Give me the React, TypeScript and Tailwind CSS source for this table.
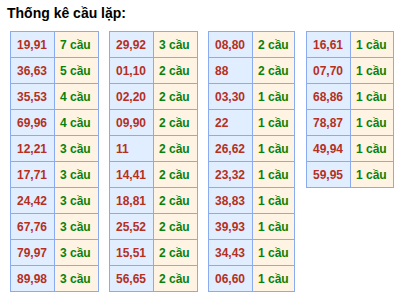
const tables: [string, string][][] = [
  [
    ["19,91", "7 cầu"],
    ["36,63", "5 cầu"],
    ["35,53", "4 cầu"],
    ["69,96", "4 cầu"],
    ["12,21", "3 cầu"],
    ["17,71", "3 cầu"],
    ["24,42", "3 cầu"],
    ["67,76", "3 cầu"],
    ["79,97", "3 cầu"],
    ["89,98", "3 cầu"],
  ],
  [
    ["29,92", "3 cầu"],
    ["01,10", "2 cầu"],
    ["02,20", "2 cầu"],
    ["09,90", "2 cầu"],
    ["11", "2 cầu"],
    ["14,41", "2 cầu"],
    ["18,81", "2 cầu"],
    ["25,52", "2 cầu"],
    ["15,51", "2 cầu"],
    ["56,65", "2 cầu"],
  ],
  [
    ["08,80", "2 cầu"],
    ["88", "2 cầu"],
    ["03,30", "1 cầu"],
    ["22", "1 cầu"],
    ["26,62", "1 cầu"],
    ["23,32", "1 cầu"],
    ["38,83", "1 cầu"],
    ["39,93", "1 cầu"],
    ["34,43", "1 cầu"],
    ["06,60", "1 cầu"],
  ],
  [
    ["16,61", "1 cầu"],
    ["07,70", "1 cầu"],
    ["68,86", "1 cầu"],
    ["78,87", "1 cầu"],
    ["49,94", "1 cầu"],
    ["59,95", "1 cầu"],
  ],
]

// widths are a bit uneven in the original, keep them as they were
const tableClass = [
  "w-[89px]",
  "ml-[10px] w-[89px]",
  "ml-[10px] w-[87px]",
  "ml-[11px] w-[88px]",
]

const StatTable = ({ rows, className }: { rows: [string, string][]; className: string }) => {
  return (
    <table className={`${className} border-collapse border border-[#8aabef] text-[12px] font-bold`}>
      <tbody>
        {rows.map(([pair, count], i) => (
          <tr key={i} className="h-[26px]">
            <td className="w-[44px] border border-[#8aabef] bg-[#e1eeff] pl-[6px] text-[#b5301e]">
              {pair}
            </td>
            <td className="border border-[#8aabef] bg-[#fff4e3] pl-[5px] text-[#07820d]">
              {count}
            </td>
          </tr>
        ))}
      </tbody>
    </table>
  )
}

export default function App() {
  return (
    <div className="h-[300px] w-[416px] bg-white font-['Liberation_Sans',Arial,sans-serif]">
      <h2 className="pl-[7px] pt-[4px] text-[14px] font-bold leading-[18px] text-black">
        Thống kê cầu lặp:
      </h2>
      <div className="mt-[9px] flex items-start pl-[10px]">
        {tables.map((rows, i) => (
          <StatTable key={i} rows={rows} className={tableClass[i]} />
        ))}
      </div>
    </div>
  )
}
